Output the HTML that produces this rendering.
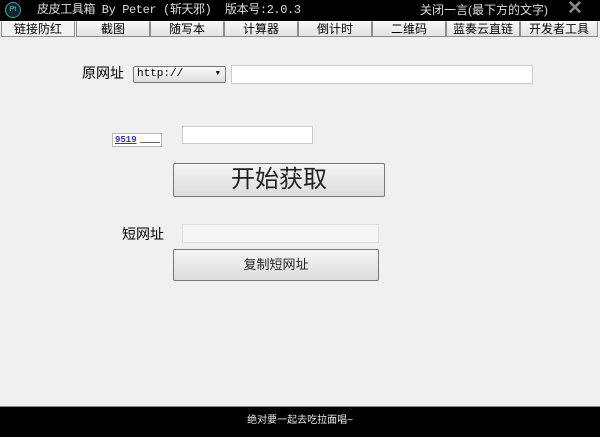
<!DOCTYPE html><html><head><meta charset="utf-8"><style>
*{margin:0;padding:0;box-sizing:border-box}
body{width:600px;height:437px;background:#f0f0f0;position:relative;overflow:hidden;font-family:"Liberation Sans","Noto Sans CJK SC",sans-serif;font-size:12px;color:#000}
.a{position:absolute}
.top{left:0;top:0;width:600px;height:21px;background:#000}
.tab{top:21px;height:16px;background:linear-gradient(#f6f6f6,#e2e2e2);border:1px solid #8a8a8a;border-top:1px solid #fff;text-align:center;font-size:12px;line-height:14px;color:#000}
.btn{background:linear-gradient(#f4f4f4,#dcdcdc);border:1px solid #777;border-radius:2px;text-align:center}
.inp{background:#fff;border:1px solid #ccc}
</style></head><body>
<div class="a top"></div>
<div class="a" style="left:5px;top:2px;width:16px;height:16px;border-radius:50%;border:1.5px solid #28a8b8;background:#10262c;color:#6cd;font-size:7px;line-height:13px;text-align:center">Pt</div>
<div class="a" style="left:37px;top:2px;color:#ddd;font-size:12px;line-height:16px;font-family:'Liberation Mono','Noto Sans CJK SC',monospace;white-space:nowrap;letter-spacing:-0.4px">皮皮工具箱 By Peter (斩天邪)&nbsp;&nbsp;版本号:2.0.3</div>
<div class="a" style="left:420px;top:3px;color:#ddd;font-size:12px;line-height:15px">关闭一言(最下方的文字)</div>
<div class="a" style="left:567px;top:-2px;color:#888;font-size:19px;font-weight:bold;line-height:22px">✕</div>
<div class="a tab" style="left:1px;width:74px;background:#f2f2f2">链接防红</div>
<div class="a tab" style="left:76px;width:74px">截图</div>
<div class="a tab" style="left:150px;width:74px">随写本</div>
<div class="a tab" style="left:224px;width:74px">计算器</div>
<div class="a tab" style="left:298px;width:74px">倒计时</div>
<div class="a tab" style="left:372px;width:74px">二维码</div>
<div class="a tab" style="left:446px;width:74px">蓝奏云直链</div>
<div class="a tab" style="left:520px;width:78px">开发者工具</div>
<div class="a" style="left:82px;top:64px;font-size:14px;line-height:18px">原网址</div>
<div class="a" style="left:133px;top:66px;width:93px;height:17px;border:1px solid #777;border-radius:2px;background:linear-gradient(#fafafa,#ddd);font-family:'Liberation Mono',monospace;font-size:11px;line-height:15px;padding-left:3px">http://<span style="position:absolute;right:5px;top:0;font-size:7px">▼</span></div>
<div class="a inp" style="left:231px;top:65px;width:302px;height:19px"></div>
<div class="a" style="left:112px;top:133px;width:50px;height:14px;background:#fff;border:1px solid #bbb;font-size:9px;color:#33c;line-height:12px;padding-left:2px;font-family:'Liberation Mono',monospace;font-weight:bold;text-decoration:underline">9519</div>
<div class="a" style="left:140px;top:142px;width:20px;height:1px;background:#666"></div>
<div class="a inp" style="left:182px;top:126px;width:131px;height:18px"></div>
<div class="a btn" style="left:173px;top:163px;width:212px;height:34px;font-size:24px;line-height:32px;color:#222">开始获取</div>
<div class="a" style="left:122px;top:225px;font-size:14px;line-height:18px">短网址</div>
<div class="a" style="left:182px;top:224px;width:197px;height:19px;background:#f6f6f6;border:1px solid #ddd"></div>
<div class="a btn" style="left:173px;top:249px;width:206px;height:32px;font-size:13px;line-height:30px;color:#222">复制短网址</div>
<div class="a" style="left:0;top:406px;width:600px;height:31px;background:#000;border-top:1px solid #888;color:#eee;font-size:10px;text-align:center;line-height:28px">绝对要一起去吃拉面唱~</div>
</body></html>
